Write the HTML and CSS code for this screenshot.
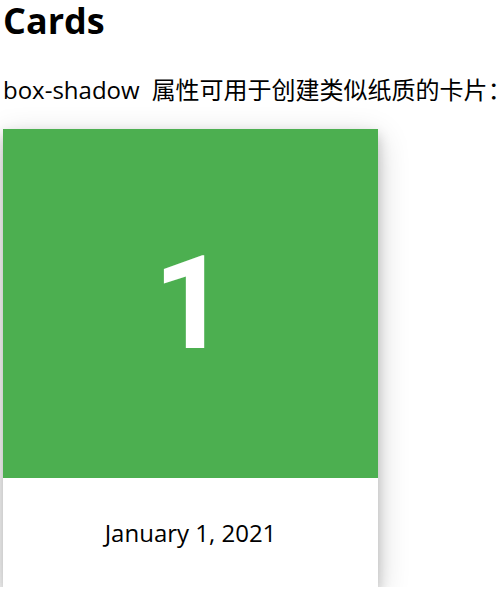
FILE: index.html
```
<!DOCTYPE html>
<html>
<head>
<meta charset="utf-8">
<link rel="stylesheet" href="styles.css">
</head>
<body>
<h2 class="title">Cards</h2>
<p class="intro">box-shadow<span class="gap"> </span>属性可用于创建类似纸质的卡片<span class="colon">：</span></p>
<div class="card">
  <div class="card-header"><h1 class="num">1</h1></div>
  <div class="card-body"><p class="date">January 1, 2021</p></div>
</div>
</body>
</html>
```
FILE: styles.css
```
html, body {
  margin: 0;
  padding: 0;
  background: #fff;
}
body {
  padding-left: 3px;
  font-family: "Open Sans", "Noto Sans CJK SC", sans-serif;
  color: #000;
}
.title {
  margin: 0;
  font-size: 36px;
  font-weight: 700;
  line-height: 42px;
}
.intro {
  margin: 32px 0 0 0;
  font-size: 24px;
  line-height: 32px;
  white-space: nowrap;
}
.gap {
  display: inline-block;
  width: 12px;
}
.colon {
  display: inline-block;
  width: 8px;
}
.card {
  margin-top: 23px;
  width: 375px;
  box-shadow: 0 6px 12px 0 rgba(0,0,0,0.2), 0 9px 30px 0 rgba(0,0,0,0.19);
  text-align: center;
}
.card-header {
  background: #4caf50;
  color: #fff;
  height: 349px;
  display: flex;
  align-items: center;
  justify-content: center;
}
.card-header .num {
  margin: 0;
  font-family: Roboto, sans-serif;
  font-weight: 700;
  font-size: 130px;
  line-height: 128px;
}
.card-body {
  height: 109px;
  display: flex;
  align-items: center;
  justify-content: center;
}
.date {
  margin: 0;
  font-size: 24px;
  line-height: 32px;
}
```
